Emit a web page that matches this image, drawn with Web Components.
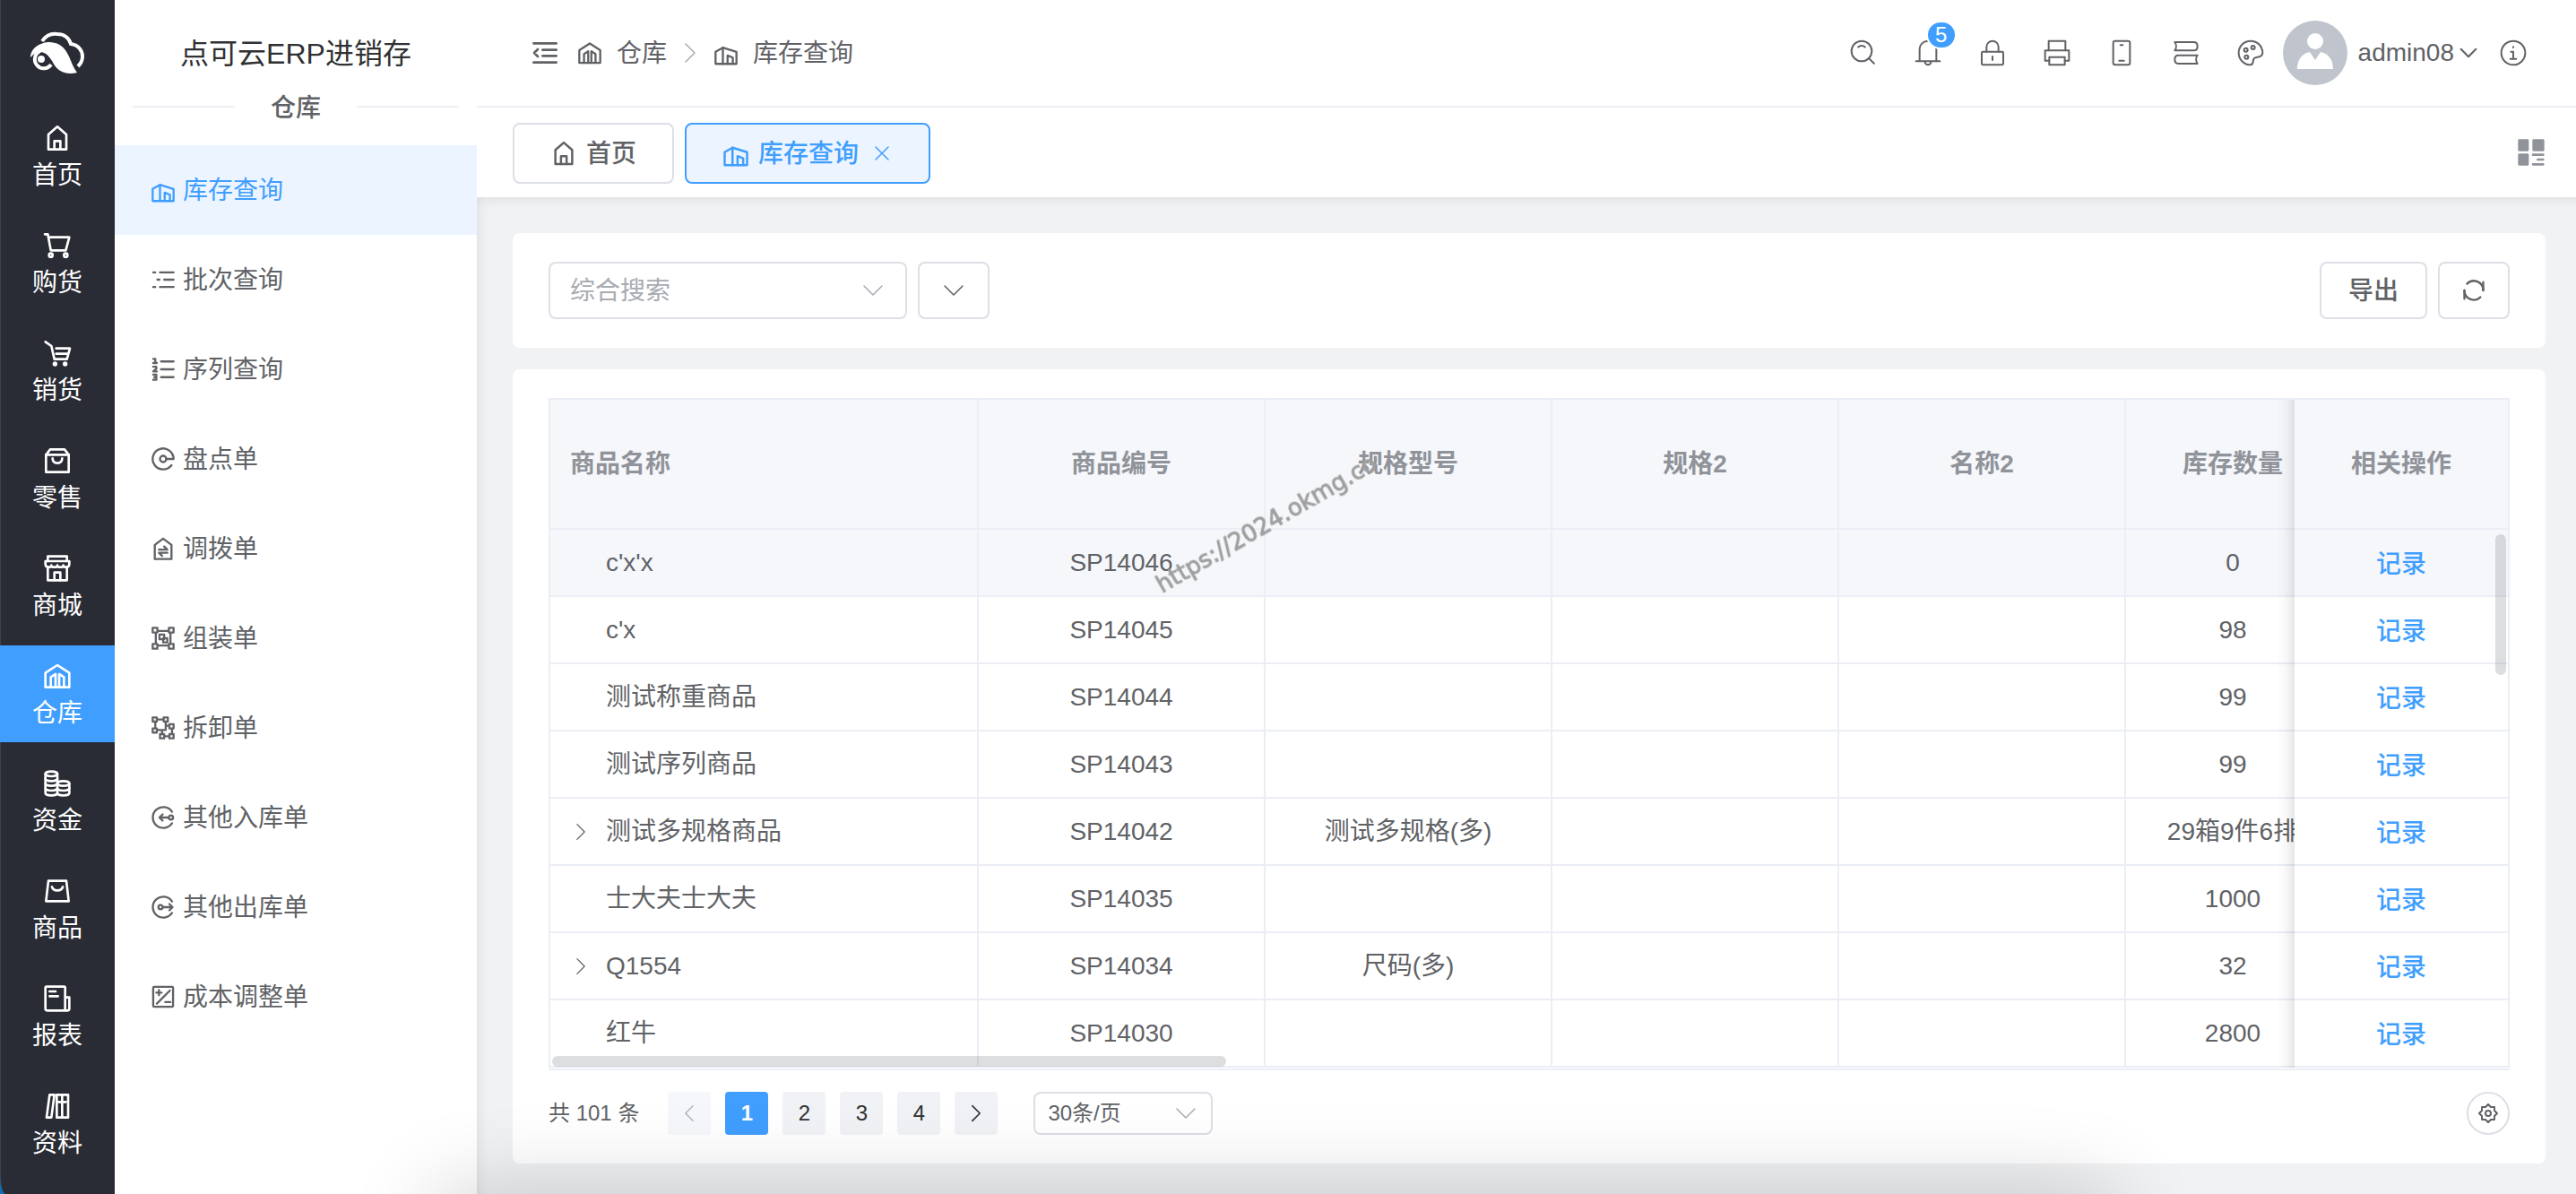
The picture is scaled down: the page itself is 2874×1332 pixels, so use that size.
<!DOCTYPE html>
<html lang="zh-CN">
<head>
<meta charset="utf-8">
<meta name="viewport" content="width=device-width, initial-scale=1">
<title>点可云ERP进销存</title>
<style>
    html {
        background-color: #0b72c0;
    }

    body {
        margin: 0;
        font-family: "Liberation Sans", "Noto Sans CJK SC", sans-serif;
        font-size: 28px;
        line-height: 40px;
        color: #606266;
    }
</style>
</head>
<body>
<erp-layout>
    <nav-rail slot="rail"></nav-rail>
    <side-menu slot="menu" title="点可云ERP进销存" group="仓库"></side-menu>
    <top-bar slot="header"></top-bar>
    <tab-bar slot="header"></tab-bar>
    <erp-card>
        <stock-filter></stock-filter>
    </erp-card>
    <erp-card>
        <stock-table></stock-table>
        <page-pager total="101"></page-pager>
    </erp-card>
</erp-layout>

<script>
const icons = {
  home: '<path d="M9 18v25h30V18L24 5z"/><path d="M19 43V29h10v14"/>',
  cart: '<path d="M3 5h5l5 27h25l6-22H9"/><circle cx="13" cy="40" r="3"/><circle cx="38" cy="40" r="3"/>',
  sell: '<path d="M4 5l10 7 5 22h21l5-18H22M22 25h20"/><circle class="fill" cx="20" cy="42" r="2"/><circle class="fill" cx="37" cy="42" r="2"/>',
  bag: '<path d="M5 14v29h38V14L36 5H12z"/><path d="M5 14h38"/><path d="M16 20c0 5 3 8 8 8s8-3 8-8"/>',
  shop: '<path d="M8 12V4h32v8"/><path d="M4 12h40v5c0 3-2 5-5 5s-5-1-5-3c0 2-2 3-5 3s-5-1-5-3c0 2-2 3-5 3s-5-1-5-3c0 2-2 3-5 3s-5-2-5-5z"/><path d="M8 22v22h32V22"/><path d="M19 44V31h10v13"/>',
  store: '<path d="M4 43V19L24 6l20 13v24z"/><path d="M13 43V26l8-5v22M27 43V21l8 5v17"/>',
  coins: '<ellipse cx="14" cy="8" rx="10" ry="4"/><path d="M4 8v32c0 2 4 4 10 4s10-2 10-4V8"/><path d="M4 16c0 2 4 4 10 4s10-2 10-4M4 24c0 2 4 4 10 4s10-2 10-4M4 32c0 2 4 4 10 4s10-2 10-4"/><ellipse cx="34" cy="24" rx="10" ry="4"/><path d="M44 24v16c0 2-4 4-10 4s-10-2-10-4"/><path d="M24 32c0 2 4 4 10 4s10-2 10-4"/>',
  goods: '<path d="M9 7h30l4 34H5z"/><path d="M15 17c1 4 4 6 9 6s8-2 9-6"/>',
  report: '<path d="M37 44H7a3 3 0 0 1-3-3V6a2 2 0 0 1 2-2h29a2 2 0 0 1 2 2v38zM37 22h7v19a3 3 0 0 1-3 3h-4"/><path d="M11 12h10M11 20h14"/>',
  books: '<path d="M11 5h8l-5 38H6z"/><path d="M23 5h19v38H23zM32 5v38M26 17h3M35 17h3"/>',
  building: '<path d="M4 45V22l14-8 26 8v23z"/><path d="M18 14v31"/><path d="M27 45V29l10 4v12"/>',
  batch: '<path d="M5 10h4M18 10h26M13 24h4M26 24h18M5 38h4M18 38h26"/>',
  serial: '<path d="M20 9h24M20 24h24M20 39h24"/><path d="M5 4h4v8M5 12h7M5 19h6v4l-6 5h7M5 34h6v10H5M7 39h4"/>',
  check: '<path d="M30 24h14A20 20 0 1 0 40 36"/><circle cx="24" cy="24" r="6"/>',
  transfer: '<path d="M8 17v27h32V17L24 5z"/><path d="M16 26h16l-6-6M32 32H16l6 6"/>',
  group: '<path d="M10 10h28v28H10z"/><path class="bg" d="M4 4h9v9H4zM35 4h9v9h-9zM4 35h9v9H4zM35 35h9v9h-9z"/><path d="M17 17h9v9h-9zM24 24h8v8h-8z"/>',
  ungroup: '<path d="M9 8h20v20H9zM29 20h12v20H22V28"/><path class="bg" d="M4 4h8v8H4zM25 4h8v8h-8zM4 25h8v8H4zM36 17h8v8h-8zM36 36h8v8h-8zM18 36h8v8h-8z"/>',
  inbound: '<path d="M41 13A20 20 0 1 0 41 35"/><path d="M34 24H17M23 18l-6 6 6 6"/><circle cx="39" cy="24" r="4"/>',
  outbound: '<path d="M41 13A20 20 0 1 0 41 35"/><path d="M24 24h18M36 18l6 6-6 6"/><circle cx="19" cy="24" r="4"/>',
  cost: '<rect x="5" y="5" width="38" height="38" rx="2"/><path d="M37 12L12 37M11 16h10M16 11v10M28 34h10"/>',
  fold: '<path d="M5 8h38M20 19h23M20 29h23M5 40h38M12 18l-6 6 6 6"/>',
  search: '<circle cx="21" cy="21" r="17"/><path d="M26.7 14.3A8 8 0 0 0 21 12a8 8 0 0 0-5.7 2.3M33.2 33.2l8.5 8.5"/>',
  bell: '<path d="M10 38V18a14 14 0 0 1 28 0v20"/><path d="M4 38h40M19 38v1a5 5 0 0 0 10 0v-1"/>',
  lock: '<rect x="6" y="22" width="36" height="22" rx="2"/><path d="M14 22v-8a10 10 0 0 1 20 0v8M24 30v6"/>',
  print: '<path d="M10 20V4h28v16"/><path d="M11 37H4V20h40v17h-7"/><path d="M11 31h26v13H11z"/>',
  phone: '<rect x="10" y="4" width="28" height="40" rx="3"/><path d="M22 11h4M20 37h8"/>',
  manual: '<path d="M5 6h32c4 0 6 3 6 7s-2 7-6 7H5c3-4 3-10 0-14z"/><path d="M43 28H11c-4 0-6 3-6 7s2 7 6 7h32c-3-4-3-10 0-14z"/>',
  palette: '<path d="M24 44c6 0 2.300-7 6-11 3.100-3.400 14 0 14-9A20 20 0 1 0 24 44z"/><circle cx="28" cy="15" r="3"/><circle cx="16" cy="19" r="3"/><circle cx="17" cy="31" r="3"/>',
  info: '<circle cx="24" cy="24" r="20"/><path d="M24 14v1M20 22h4v12M19 34h10"/>',
  grid: '<path class="solid" d="M4 2h14a2 2 0 0 1 2 2v16a2 2 0 0 1-2 2H4a2 2 0 0 1-2-2V4a2 2 0 0 1 2-2zM28 2h16a2 2 0 0 1 2 2v16a2 2 0 0 1-2 2H28a2 2 0 0 1-2-2V4a2 2 0 0 1 2-2zM4 26h14a2 2 0 0 1 2 2v16a2 2 0 0 1-2 2H4a2 2 0 0 1-2-2V28a2 2 0 0 1 2-2z"/><path d="M27 28h17M35 36h9M27 44h17"/>',
  refresh: '<path d="M42 8v16M6 24v16"/><path d="M42 24A18 18 0 0 0 11 11.300M6 24a18 18 0 0 0 30.500 13"/>',
  gear: '<path d="M24 4l6 6h8v8l6 6-6 6v8h-8l-6 6-6-6h-8v-8l-6-6 6-6v-8h8z"/><circle cx="24" cy="24" r="6"/>',
  down: '<path d="M4 14l20 20 20-20"/>',
  left: '<path d="M34 4L14 24l20 20"/>',
  right: '<path d="M14 4l20 20-20 20"/>',
  close: '<path d="M10 10l28 28M38 10L10 38"/>'
};

class ErpIcon extends HTMLElement {
  constructor() {
    super();
    this.root = this.attachShadow({ mode: 'open' });
  }

  connectedCallback() {
    const size = this.getAttribute('size') || 32;
    const stroke = this.getAttribute('stroke') || 3;
    this.root.innerHTML = `
            <style>
                :host {
                    display: inline-flex;
                    flex: none;
                }

                svg {
                    display: block;
                    fill: none;
                    stroke: currentColor;
                    stroke-linecap: round;
                    stroke-linejoin: round;
                }

                .fill, .solid {
                    fill: currentColor;
                }

                .solid {
                    stroke: none;
                }

                .bg {
                    fill: #ffffff;
                }
            </style>
            <svg width="${size}" height="${size}" viewBox="0 0 48 48" stroke-width="${stroke}" aria-hidden="true">
                ${icons[this.getAttribute('name')]}
            </svg>
        `;
  }
}

class ErpLayout extends HTMLElement {
  constructor() {
    super();
    this.attachShadow({ mode: 'open' }).innerHTML = `
            <style>
                :host {
                    display: grid;
                    grid-template-columns: 128px 404px minmax(0, 1fr);
                    min-height: 100vh;
                }

                .page {
                    display: flex;
                    flex-direction: column;
                    background-color: #f1f2f4;
                }

                header {
                    background-color: #ffffff;
                }

                main {
                    flex: 1;
                    display: flex;
                    flex-direction: column;
                    gap: 24px;
                    padding: 40px 34px 34px 40px;
                    box-shadow: inset 8px 8px 16px -8px rgba(0,0,0,0.1);
                }

                /* soft shade that rises from the lower edge of the window */
                .shade {
                    position: fixed;
                    top: 100%;
                    left: 17%;
                    right: 18%;
                    height: 200px;
                    box-shadow: 0 0 100px rgba(0,0,0,0.2);
                    pointer-events: none;
                }
            </style>
            <slot name="rail"></slot>
            <slot name="menu"></slot>
            <div class="page">
                <header><slot name="header"></slot></header>
                <main><slot></slot></main>
            </div>
            <div class="shade"></div>
        `;
  }
}

class NavRail extends HTMLElement {
  constructor() {
    super();
    this.root = this.attachShadow({ mode: 'open' });
    this.items = [
      ['home', '首页'],
      ['cart', '购货'],
      ['sell', '销货'],
      ['bag', '零售'],
      ['shop', '商城'],
      ['store', '仓库'],
      ['coins', '资金'],
      ['goods', '商品'],
      ['report', '报表'],
      ['books', '资料']
    ];
    this.renderHTML();
  }

  renderHTML() {
    this.root.innerHTML = `
            <style>
                :host {
                    display: block;
                    background-color: #2a2c35;
                    border-bottom-left-radius: 6px 20px;
                    box-shadow: inset 1px 0 0 rgba(255,255,255,0.1);
                    color: #ffffff;
                }

                .logo {
                    display: flex;
                    align-items: center;
                    justify-content: center;
                    height: 120px;
                }

                nav {
                    display: flex;
                    flex-direction: column;
                    gap: 12px;
                }

                a {
                    box-sizing: border-box;
                    height: 108px;
                    padding-top: 18px;
                    display: flex;
                    flex-direction: column;
                    align-items: center;
                    gap: 6px;
                    color: inherit;
                    text-decoration: none;
                }

                a[aria-current] {
                    background-color: #409eff;
                }
            </style>
            <div class="logo">
                <svg width="64" height="50" viewBox="0 0 64 50" fill="none" aria-hidden="true">
                    <path d="M15 11C19 5 25 2 32 3c7 0 13 4 15 11 8 1 13 7 13 14 0 4-2 8-5 11" stroke="#fff" stroke-width="4"/>
                    <path d="M2 29c0-9 9-17 22-17 13 1 17 8 21 16 3 7 5 13 9 18-12 3-20-1-25-8-4-7-8-14-15-15-6 0-9 3-12 6z" fill="#fff"/>
                    <path d="M13 22a10 10 0 1 0 12 15" stroke="#fff" stroke-width="4"/>
                    <circle cx="14" cy="31" r="4" fill="#fff"/>
                </svg>
            </div>
            <nav>
                ${this.items.map(([icon, text]) => `
                    <a href="#"${text === '仓库' ? ' aria-current="page"' : ''}><erp-icon name="${icon}" stroke="4"></erp-icon>${text}</a>
                `).join('')}
            </nav>
        `;
  }
}

class SideMenu extends HTMLElement {
  constructor() {
    super();
    this.root = this.attachShadow({ mode: 'open' });
    this.items = [
      ['building', '库存查询'],
      ['batch', '批次查询'],
      ['serial', '序列查询'],
      ['check', '盘点单'],
      ['transfer', '调拨单'],
      ['group', '组装单'],
      ['ungroup', '拆卸单'],
      ['inbound', '其他入库单'],
      ['outbound', '其他出库单'],
      ['cost', '成本调整单']
    ];
  }

  connectedCallback() {
    this.root.innerHTML = `
            <style>
                :host {
                    display: block;
                    background-color: #ffffff;
                }

                h1 {
                    margin: 0;
                    padding-top: 23px;
                    font-size: 32px;
                    line-height: 74px;
                    font-weight: 400;
                    text-align: center;
                    color: #303133;
                }

                .group {
                    display: flex;
                    align-items: center;
                    gap: 40px;
                    height: 44px;
                    margin: 0 20px 21px;
                    font-weight: 500;
                }

                .group::before, .group::after {
                    content: "";
                    flex: 1;
                    height: 2px;
                    background-color: #ebeef5;
                }

                .group span {
                    padding-top: 4px;
                }

                a {
                    display: flex;
                    align-items: center;
                    gap: 8px;
                    height: 100px;
                    padding-left: 40px;
                    color: inherit;
                    text-decoration: none;
                }

                a span {
                    padding-top: 2px;
                }

                a[aria-current] {
                    background-color: #ecf5ff;
                    color: #409eff;
                }
            </style>
            <h1>${this.getAttribute('title')}</h1>
            <div class="group"><span>${this.getAttribute('group')}</span></div>
            <nav>
                ${this.items.map(([icon, text], i) => `
                    <a href="#"${i === 0 ? ' aria-current="page"' : ''}><erp-icon name="${icon}" size="28" stroke="4"></erp-icon><span>${text}</span></a>
                `).join('')}
            </nav>
        `;
  }
}

class TopBar extends HTMLElement {
  constructor() {
    super();
    this.attachShadow({ mode: 'open' }).innerHTML = `
            <style>
                :host {
                    box-sizing: border-box;
                    display: flex;
                    align-items: center;
                    justify-content: space-between;
                    height: 120px;
                    padding: 0 54px 0 60px;
                    border-bottom: 2px solid #ebeef5;
                }

                button {
                    display: flex;
                    align-items: center;
                    padding: 0;
                    border: 0;
                    background: none;
                    font: inherit;
                    color: inherit;
                }

                .crumbs, .crumb, .tools, .user {
                    display: flex;
                    align-items: center;
                }

                .crumbs {
                    gap: 14px;
                    margin-left: 20px;
                }

                .crumb {
                    gap: 16px;
                    color: inherit;
                    text-decoration: none;
                }

                .crumb span {
                    padding-top: 2px;
                }

                .separator {
                    color: #a8abb2;
                }

                .left {
                    display: flex;
                    align-items: center;
                }

                .tools {
                    gap: 40px;
                }

                .bell {
                    position: relative;
                }

                .badge {
                    position: absolute;
                    left: 14px;
                    top: -20px;
                    min-width: 30px;
                    border: 2px solid #ffffff;
                    border-radius: 16px;
                    background-color: #409eff;
                    color: #ffffff;
                    font-size: 24px;
                    line-height: 28px;
                    text-align: center;
                }

                .user {
                    gap: 12px;
                    margin-left: 20px;
                    margin-right: 24px;
                }

                .name {
                    gap: 6px;
                }

                .right {
                    display: flex;
                    align-items: center;
                }
            </style>
            <div class="left">
                <button aria-label="折叠菜单"><erp-icon name="fold" stroke="4"></erp-icon></button>
                <nav class="crumbs">
                    <a class="crumb" href="#"><erp-icon name="store" size="28" stroke="4"></erp-icon><span>仓库</span></a>
                    <erp-icon class="separator" name="right" size="24"></erp-icon>
                    <a class="crumb" href="#"><erp-icon name="building" size="28" stroke="4"></erp-icon><span>库存查询</span></a>
                </nav>
            </div>
            <div class="right">
                <div class="tools">
                    <button aria-label="搜索"><erp-icon name="search"></erp-icon></button>
                    <button class="bell" aria-label="消息"><erp-icon name="bell"></erp-icon><span class="badge">5</span></button>
                    <button aria-label="锁屏"><erp-icon name="lock"></erp-icon></button>
                    <button aria-label="打印"><erp-icon name="print"></erp-icon></button>
                    <button aria-label="手机端"><erp-icon name="phone"></erp-icon></button>
                    <button aria-label="手册"><erp-icon name="manual"></erp-icon></button>
                    <button aria-label="主题"><erp-icon name="palette"></erp-icon></button>
                </div>
                <div class="user">
                    <svg width="72" height="72" viewBox="0 0 72 72" aria-hidden="true">
                        <circle cx="36" cy="36" r="36" fill="#c0c4cc"/>
                        <circle cx="36" cy="23" r="9" fill="#fff"/>
                        <path d="M16 54c0-9 4-17 14-19l6 9 6-9c10 2 14 10 14 19z" fill="#fff"/>
                    </svg>
                    <button class="name">admin08<erp-icon name="down" size="20" stroke="5"></erp-icon></button>
                </div>
                <button aria-label="关于"><erp-icon name="info"></erp-icon></button>
            </div>
        `;
  }
}

class TabBar extends HTMLElement {
  constructor() {
    super();
    this.attachShadow({ mode: 'open' }).innerHTML = `
            <style>
                :host {
                    box-sizing: border-box;
                    display: flex;
                    align-items: center;
                    justify-content: space-between;
                    height: 100px;
                    padding: 2px 34px 0 40px;
                }

                .tabs {
                    display: flex;
                    gap: 12px;
                }

                .tab {
                    box-sizing: border-box;
                    display: flex;
                    align-items: center;
                    gap: 10px;
                    height: 68px;
                    padding: 0 40px;
                    border: 2px solid #dcdfe6;
                    border-radius: 8px;
                    background-color: #ffffff;
                    font: inherit;
                    font-weight: 500;
                    color: inherit;
                }

                .tab.active {
                    border-color: #409eff;
                    background-color: #ecf5ff;
                    color: #409eff;
                }

                .tab span {
                    padding-top: 2px;
                }

                .close {
                    margin-left: 4px;
                }

                .more {
                    padding: 0;
                    border: 0;
                    background: none;
                    color: #909399;
                }
            </style>
            <div class="tabs">
                <button class="tab"><erp-icon name="home" size="30" stroke="4"></erp-icon><span>首页</span></button>
                <button class="tab active"><erp-icon name="building" size="30" stroke="4"></erp-icon><span>库存查询</span><erp-icon class="close" name="close" size="24"></erp-icon></button>
            </div>
            <button class="more" aria-label="标签操作"><erp-icon name="grid" stroke="4"></erp-icon></button>
        `;
  }
}

class ErpCard extends HTMLElement {
  constructor() {
    super();
    this.attachShadow({ mode: 'open' }).innerHTML = `
            <style>
                :host {
                    display: flex;
                    flex-direction: column;
                    gap: 24px;
                    padding: 32px 40px;
                    border-radius: 8px;
                    background-color: #ffffff;
                }
            </style>
            <slot></slot>
        `;
  }
}

class StockFilter extends HTMLElement {
  constructor() {
    super();
    this.attachShadow({ mode: 'open' }).innerHTML = `
            <style>
                :host, .group, .field, button {
                    display: flex;
                    align-items: center;
                }

                :host {
                    justify-content: space-between;
                }

                .group {
                    gap: 12px;
                }

                .field, button {
                    box-sizing: border-box;
                    height: 64px;
                    border: 2px solid #dcdfe6;
                    border-radius: 8px;
                    background-color: #ffffff;
                }

                .field {
                    width: 400px;
                    padding: 0 24px 0 22px;
                    color: #a8abb2;
                }

                input {
                    flex: 1;
                    min-width: 0;
                    padding: 2px 0 0;
                    border: 0;
                    outline: 0;
                    font: inherit;
                    color: #606266;
                }

                input::placeholder {
                    color: #a8abb2;
                }

                button {
                    justify-content: center;
                    width: 80px;
                    padding: 0;
                    font: inherit;
                    font-weight: 500;
                    color: inherit;
                }

                .export {
                    width: 120px;
                    padding-top: 2px;
                }
            </style>
            <div class="group">
                <label class="field">
                    <input type="text" placeholder="综合搜索" aria-label="综合搜索">
                    <erp-icon name="down" size="24"></erp-icon>
                </label>
                <button aria-label="展开"><erp-icon name="down" size="24"></erp-icon></button>
            </div>
            <div class="group">
                <button class="export">导出</button>
                <button aria-label="刷新"><erp-icon name="refresh" size="28" stroke="4"></erp-icon></button>
            </div>
        `;
  }
}

class StockTable extends HTMLElement {
  constructor() {
    super();
    this.root = this.attachShadow({ mode: 'open' });
    this.columns = ['商品名称', '商品编号', '规格型号', '规格2', '名称2', '库存数量', '相关操作'];
    this.rows = [
      { name: "c'x'x", code: 'SP14046', spec: '', count: '0' },
      { name: "c'x", code: 'SP14045', spec: '', count: '98' },
      { name: '测试称重商品', code: 'SP14044', spec: '', count: '99' },
      { name: '测试序列商品', code: 'SP14043', spec: '', count: '99' },
      { name: '测试多规格商品', code: 'SP14042', spec: '测试多规格(多)', count: '29箱9件6排', tree: true },
      { name: '士大夫士大夫', code: 'SP14035', spec: '', count: '1000' },
      { name: 'Q1554', code: 'SP14034', spec: '尺码(多)', count: '32', tree: true },
      { name: '红牛', code: 'SP14030', spec: '', count: '2800' }
    ];
    this.renderHTML();
  }

  renderRow(row) {
    return `
            <tr>
                <td><div class="name"><span class="expand">${row.tree ? '<erp-icon name="right" size="20"></erp-icon>' : ''}</span>${row.name}</div></td>
                <td>${row.code}</td>
                <td>${row.spec}</td>
                <td></td>
                <td></td>
                <td>${row.count}</td>
                <td><a href="#">记录</a></td>
            </tr>
        `;
  }

  renderHTML() {
    this.root.innerHTML = `
            <style>
                :host {
                    display: block;
                    position: relative;
                    border: 2px solid #ebeef5;
                    border-width: 2px 0;
                }

                .scroll {
                    overflow: hidden;
                    padding-bottom: 1px;
                }

                table {
                    width: 100%;
                    min-width: 2240px;
                    table-layout: fixed;
                    border-collapse: separate;
                    border-spacing: 0;
                }

                col {
                    width: 320px;
                }

                .wide {
                    width: 480px;
                }

                .narrow {
                    width: 240px;
                }

                th, td {
                    box-sizing: border-box;
                    height: 75px;
                    padding: 0;
                    border-right: 2px solid #ebeef5;
                    border-bottom: 2px solid #ebeef5;
                    background-color: #ffffff;
                    text-align: center;
                    white-space: nowrap;
                }

                th {
                    height: 145px;
                    background-color: #f5f7fb;
                    font-weight: 700;
                    color: #909399;
                }

                th:first-child, td:first-child {
                    padding-left: 22px;
                    border-left: 2px solid #ebeef5;
                    text-align: left;
                }

                th:nth-last-child(2), td:nth-last-child(2) {
                    padding-right: 2px;
                    border-right: 0;
                }

                th:last-child, td:last-child {
                    position: sticky;
                    right: 0;
                }

                td:last-child {
                    padding-top: 4px;
                }

                th:last-child::before, td:last-child::before {
                    content: "";
                    position: absolute;
                    top: 0;
                    bottom: -2px;
                    left: -20px;
                    width: 20px;
                    box-shadow: inset -20px 0 20px -20px rgba(0,0,0,0.2);
                }

                tbody tr:first-child td {
                    background-color: #f5f7fb;
                }

                .name, .expand {
                    display: flex;
                    align-items: center;
                }

                .expand {
                    width: 38px;
                    padding-left: 2px;
                }

                a {
                    font-weight: 500;
                    color: #409eff;
                    text-decoration: none;
                }

                .thumb {
                    position: absolute;
                    border-radius: 6px;
                    background-color: rgba(144,147,153,0.3);
                }

                .thumb.across {
                    left: 4px;
                    bottom: 2px;
                    width: 752px;
                    height: 12px;
                }

                .thumb.down {
                    right: 4px;
                    top: 150px;
                    width: 12px;
                    height: 157px;
                }

                .watermark {
                    position: absolute;
                    left: 688px;
                    top: 190px;
                    font-family: "DejaVu Sans", sans-serif;
                    font-size: 26px;
                    line-height: 32px;
                    color: #a0a0a0;
                    -webkit-text-stroke: 1px #a0a0a0;
                    transform: rotate(-30deg);
                    transform-origin: 0 100%;
                    pointer-events: none;
                }
            </style>
            <div class="scroll">
                <table>
                    <colgroup><col class="wide"><col><col><col><col><col class="narrow"><col class="narrow"></colgroup>
                    <thead>
                        <tr>${this.columns.map(text => `<th>${text}</th>`).join('')}</tr>
                    </thead>
                    <tbody>${this.rows.map(row => this.renderRow(row)).join('')}</tbody>
                </table>
            </div>
            <div class="thumb across"></div>
            <div class="thumb down"></div>
            <div class="watermark">https://2024.okmg.co</div>
        `;
  }
}

class PagePager extends HTMLElement {
  constructor() {
    super();
    this.root = this.attachShadow({ mode: 'open' });
  }

  connectedCallback() {
    this.root.innerHTML = `
            <style>
                :host {
                    display: flex;
                    align-items: center;
                    justify-content: space-between;
                    font-size: 24px;
                }

                .pager, .pages {
                    display: flex;
                    align-items: center;
                }

                .pager {
                    gap: 32px;
                }

                .pages {
                    gap: 16px;
                }

                button {
                    box-sizing: border-box;
                    display: flex;
                    align-items: center;
                    justify-content: center;
                    width: 48px;
                    height: 48px;
                    padding: 0;
                    border: 0;
                    border-radius: 4px;
                    background-color: #f0f2f5;
                    font: inherit;
                    color: #303133;
                }

                button:disabled {
                    background-color: #f5f7fa;
                    color: #a8abb2;
                }

                button.active {
                    background-color: #409eff;
                    color: #ffffff;
                    font-weight: 700;
                }

                .size {
                    display: grid;
                    align-items: center;
                    margin-left: 8px;
                    color: #a8abb2;
                }

                .size > * {
                    grid-area: 1 / 1;
                }

                .size erp-icon {
                    justify-self: end;
                    margin-right: 18px;
                    pointer-events: none;
                }

                select {
                    box-sizing: border-box;
                    width: 200px;
                    height: 48px;
                    padding: 0 14px;
                    border: 2px solid #dcdfe6;
                    border-radius: 8px;
                    appearance: none;
                    background-color: #ffffff;
                    font: inherit;
                    color: #606266;
                }

                .setting {
                    border: 2px solid #dcdfe6;
                    border-radius: 50%;
                    background-color: #ffffff;
                    color: #606266;
                }
            </style>
            <div class="pager">
                <span>共 ${this.getAttribute('total')} 条</span>
                <div class="pages">
                    <button aria-label="上一页" disabled><erp-icon name="left" size="20"></erp-icon></button>
                    <button class="active">1</button>
                    <button>2</button>
                    <button>3</button>
                    <button>4</button>
                    <button aria-label="下一页"><erp-icon name="right" size="20" stroke="4"></erp-icon></button>
                </div>
                <div class="size">
                    <select aria-label="每页条数"><option>30条/页</option></select>
                    <erp-icon name="down" size="24"></erp-icon>
                </div>
            </div>
            <button class="setting" aria-label="表格设置"><erp-icon name="gear" size="24" stroke="4"></erp-icon></button>
        `;
  }
}

customElements.define('erp-icon', ErpIcon);
customElements.define('erp-layout', ErpLayout);
customElements.define('nav-rail', NavRail);
customElements.define('side-menu', SideMenu);
customElements.define('top-bar', TopBar);
customElements.define('tab-bar', TabBar);
customElements.define('erp-card', ErpCard);
customElements.define('stock-filter', StockFilter);
customElements.define('stock-table', StockTable);
customElements.define('page-pager', PagePager);
</script>
</body>
</html>
